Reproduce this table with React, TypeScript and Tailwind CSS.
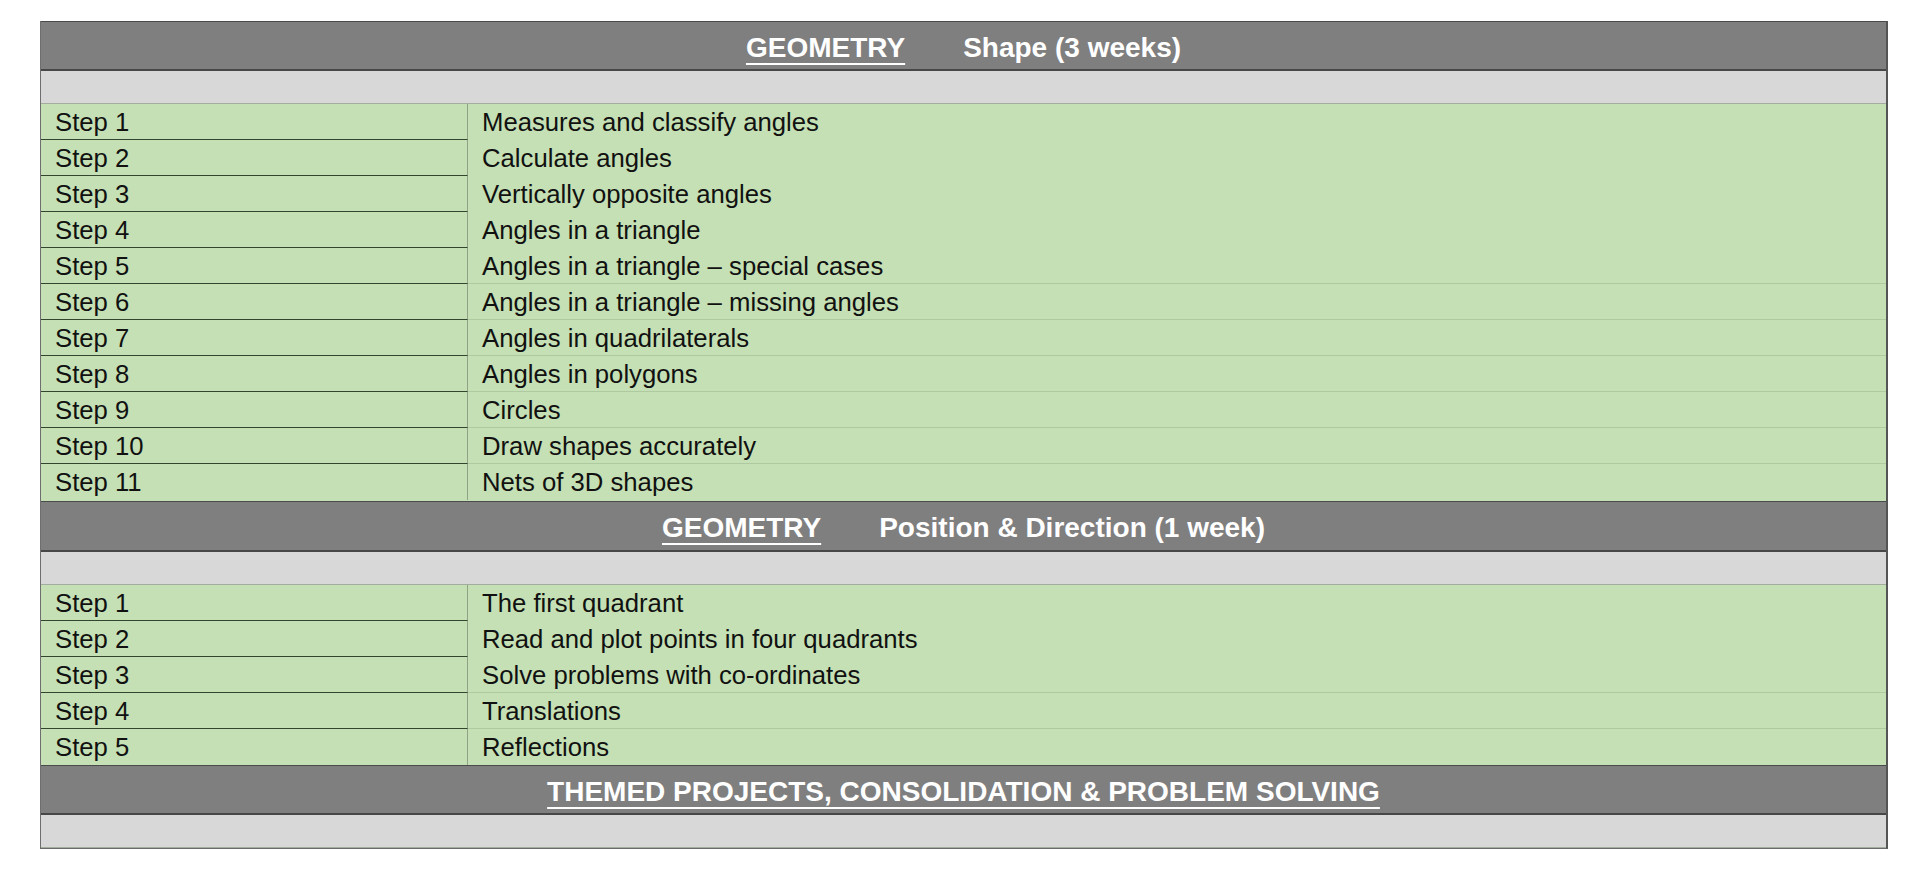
import React from 'react';

const shapeSteps = [
    'Measures and classify angles',
    'Calculate angles',
    'Vertically opposite angles',
    'Angles in a triangle',
    'Angles in a triangle – special cases',
    'Angles in a triangle – missing angles',
    'Angles in quadrilaterals',
    'Angles in polygons',
    'Circles',
    'Draw shapes accurately',
    'Nets of 3D shapes',
];

const positionSteps = [
    'The first quadrant',
    'Read and plot points in four quadrants',
    'Solve problems with co-ordinates',
    'Translations',
    'Reflections',
];

const Header: React.FC<{ title: string; sub?: string; tall?: boolean }> = ({ title, sub, tall }) => (
    <div className={`${tall ? 'h-[51px]' : 'h-[50px]'} pt-[4px] bg-[#7f7f7f] border-t border-b-2 border-t-[#4a4a4a] border-b-[#474747] flex items-center justify-center text-white font-bold text-[28px] leading-none`}>
        <span className="underline decoration-2 underline-offset-[6px]">{title}</span>
        {sub && <span className="ml-[58px]">{sub}</span>}
    </div>
);

const Blank: React.FC = () => (
    <div className="h-[33px] bg-[#d8d8d8] border-b border-[#a3ad9f]" />
);

const StepRow: React.FC<{ n: number; text: string; line: boolean; last: boolean }> = ({ n, text, line, last }) => (
    <div className="h-[36px] flex bg-[#c5e0b4] text-[25.7px] leading-none text-[#111]">
        <div className={`w-[427px] flex items-center pl-[14px] pt-[2px] border-r border-r-[#8fa286] ${last ? '' : 'border-b border-b-[#34452f]'}`}>
            Step {n}
        </div>
        <div className={`flex-1 flex items-center pl-[14px] pt-[2px] ${line && !last ? 'border-b border-b-[#afcaa0]' : ''}`}>
            {text}
        </div>
    </div>
);

export default function App() {
    return (
        <div className="w-[1920px] h-[876px] bg-white pt-[21px] pl-[40px]" style={{ fontFamily: '"Liberation Sans", Arial, sans-serif' }}>
            <div className="w-[1848px] border-l border-l-[#6e6e6e] border-r-2 border-r-[#555] border-b border-b-[#6a6a6a]">
                <Header title="GEOMETRY" sub="Shape (3 weeks)" />
                <Blank />
                {shapeSteps.map((s, i) => (
                    <StepRow key={s} n={i + 1} text={s} line={i >= 4} last={i === shapeSteps.length - 1} />
                ))}
                <div className="h-px bg-[#c5e0b4]" />
                <Header title="GEOMETRY" sub="Position & Direction (1 week)" tall />
                <Blank />
                {positionSteps.map((s, i) => (
                    <StepRow key={s} n={i + 1} text={s} line={i >= 2} last={i === positionSteps.length - 1} />
                ))}
                <Header title="THEMED PROJECTS, CONSOLIDATION & PROBLEM SOLVING" />
                <Blank />
            </div>
        </div>
    );
}
